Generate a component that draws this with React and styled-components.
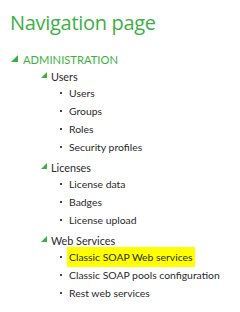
import React from 'react';
import styled, { createGlobalStyle } from 'styled-components';

const Global = createGlobalStyle`
  body {
    margin: 0;
    background: #ffffff;
    font-family: Lato, "Liberation Sans", sans-serif;
  }
`;

const Page = styled.div`
  width: 240px;
  height: 312px;
  padding: 10px 0 0 10px;
  box-sizing: border-box;
  overflow: hidden;
`;

const Title = styled.h1`
  margin: 0;
  font-family: "Open Sans", "Liberation Sans", sans-serif;
  font-weight: 400;
  font-size: 20px;
  line-height: 26px;
  color: #3cb043;
  letter-spacing: -0.3px;
`;

const Section = styled.div`
  margin-top: 14px;
`;

const Head = styled.div`
  display: flex;
  align-items: center;
  gap: ${({ small }) => (small ? '4px' : '5px')};
  height: ${({ small }) => (small ? '16px' : '18px')};
  white-space: nowrap;
  font-size: ${({ small }) => (small ? '10.8px' : '11.2px')};
  color: ${({ small }) => (small ? '#2a2a2a' : '#3cb043')};
  padding-left: ${({ indent }) => indent || 0}px;
`;

const Arrow = styled.span`
  flex-shrink: 0;
  width: 0;
  height: 0;
  margin-left: ${({ size }) => (size > 6 ? 1 : 0)}px;
  border-left: ${({ size }) => size}px solid transparent;
  border-bottom: ${({ size }) => size}px solid #3cb043;
  margin-top: -2px;
`;

const Group = styled.div`
  margin-top: ${({ first }) => (first ? 0 : 3)}px;
`;

const List = styled.ul`
  list-style: none;
  margin: 0;
  padding: 0 0 0 50px;
`;

const Item = styled.li`
  display: flex;
  align-items: center;
  height: 18px;
  white-space: nowrap;
  font-size: 10.4px;
  color: #2a2a2a;
  &::before {
    content: '';
    flex-shrink: 0;
    width: 2px;
    height: 2px;
    background: #444;
    margin-right: 7px;
  }
`;

const Mark = styled.span`
  display: inline-block;
  height: 20px;
  line-height: 20px;
  background: ${({ hl }) => (hl ? '#ffff00' : 'transparent')};
  padding: 0 2px;
  margin-left: -2px;
`;

const groups = [
  { name: 'Users', items: ['Users', 'Groups', 'Roles', 'Security profiles'] },
  { name: 'Licenses', items: ['License data', 'Badges', 'License upload'] },
  { name: 'Web Services', items: ['Classic SOAP Web services', 'Classic SOAP pools configuration', 'Rest web services'] },
];

export default function App() {
  return (
    <Page>
      <Global />
      <Title>Navigation page</Title>
      <Section>
        <Head>
          <Arrow size={7} />
          ADMINISTRATION
        </Head>
        {groups.map((g, i) => (
          <Group key={g.name} first={i === 0}>
            <Head small indent={31}>
              <Arrow size={6} />
              {g.name}
            </Head>
            <List>
              {g.items.map((it) => (
                <Item key={it}>
                  <Mark hl={it === 'Classic SOAP Web services'}>{it}</Mark>
                </Item>
              ))}
            </List>
          </Group>
        ))}
      </Section>
    </Page>
  );
}
